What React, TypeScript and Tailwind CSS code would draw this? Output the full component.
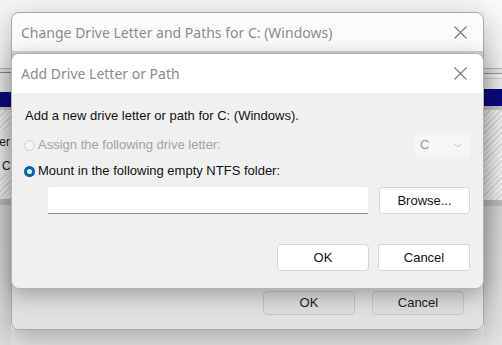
import React from "react";

const titleFont = { fontFamily: '"Noto Sans", "Open Sans", sans-serif' };
const bodyFont = { fontFamily: '"Liberation Sans", Arial, sans-serif' };

function CloseIcon() {
  return (
    <svg width="13" height="13" viewBox="0 0 13 13" fill="none" stroke="#7a7a7a" strokeWidth="1.1">
      <path d="M0.5 0.5L12.5 12.5M12.5 0.5L0.5 12.5" />
    </svg>
  );
}

function Chevron() {
  return (
    <svg width="8" height="5" viewBox="0 0 8 5" fill="none" stroke="#c4c4c4" strokeWidth="1">
      <path d="M0.5 0.5L4 4L7.5 0.5" />
    </svg>
  );
}

function Hatch({ className = "" }: { className?: string }) {
  return (
    <div
      className={`bg-[repeating-linear-gradient(135deg,#d9d9d9_0px,#d9d9d9_1px,#f3f3f3_1px,#f3f3f3_4px)] ${className}`}
    />
  );
}

// window content peeking out behind the dialogs
function LeftStrip() {
  return (
    <div className="w-[11px] flex flex-col overflow-hidden">
      <div className="h-[68px] bg-[#f5f5f5]" />
      <div className="h-px bg-[#b9b9b9]" />
      <div className="h-[3px] bg-[#e6e6e6]" />
      <div className="h-px bg-[#8e8e8e]" />
      <div className="h-[19px] bg-[#ededed]" />
      <div className="h-[15px] bg-[#0a0a80]" />
      <div className="h-[3px] bg-[#cfcfcf]" />
      <Hatch className="h-[20px]" />
      <div className="h-[24px] bg-[#efefef] flex justify-end items-center overflow-hidden">
        <span className="text-[12px] leading-[14px] text-[#222] whitespace-nowrap mr-[1px]" style={bodyFont}>er</span>
      </div>
      <div className="h-[20px] bg-[#efefef] flex items-end pl-[2px] pb-[1px]">
        <span className="text-[12px] leading-[14px] text-[#222]" style={bodyFont}>C</span>
      </div>
      <Hatch className="h-[25px]" />
      <div className="h-[6px] bg-[#bdbdbd]" />
      <div className="flex-1 bg-[linear-gradient(180deg,#d6d6d6,#dedede)]" />
    </div>
  );
}

function RightStrip() {
  return (
    <div className="flex-1 flex flex-col overflow-hidden">
      <div className="h-[68px] bg-[linear-gradient(180deg,#fafafa,#f1f1f1)]" />
      <div className="h-px bg-[#b9b9b9]" />
      <div className="h-[4px] bg-[#e6e6e6]" />
      <div className="h-px bg-[#9a9a9a]" />
      <div className="h-[4px] bg-[#efefef]" />
      <div className="h-px bg-[#cdcdcd]" />
      <div className="h-[10px] bg-[#eeeeee]" />
      <div className="h-[17px] bg-[#0a0a80]" />
      <div className="h-[4px] bg-[#c6c6c6]" />
      <Hatch className="h-[90px]" />
      <div className="h-[6px] bg-[#bdbdbd]" />
      <div className="flex-1 bg-[linear-gradient(180deg,#d4d4d4,#e4e4e4)]" />
    </div>
  );
}

function Button({ label, className = "" }: { label: string; className?: string }) {
  return (
    <div
      className={`flex items-center justify-center rounded-[4px] border text-[13px] ${className}`}
      style={bodyFont}
    >
      {label}
    </div>
  );
}

function BackDialog() {
  return (
    <div className="absolute left-[11px] top-[12px] w-[473px] h-[318px] rounded-[8px] border border-[#a9a9a9] overflow-hidden flex flex-col shadow-[0_8px_28px_rgba(0,0,0,0.28)] bg-[#e1e1e1]">
      <div className="h-[38px] bg-[#fbfbfb] flex items-center justify-between pl-[9px] pr-[16px]">
        <span className="text-[14px] text-[#8c8c8c]" style={titleFont}>
          Change Drive Letter and Paths for C: (Windows)
        </span>
        <CloseIcon />
      </div>
      <div className="flex-1 bg-[linear-gradient(180deg,#d0d0d0,#e3e3e3_40%,#e1e1e1)] flex items-end justify-end gap-[17px] pr-[19px] pb-[14px]">
        <Button label="OK" className="w-[92px] h-[24px] bg-[#dedede] border-[#c6c6c6] text-[#222]" />
        <Button label="Cancel" className="w-[92px] h-[24px] bg-[#dedede] border-[#c6c6c6] text-[#222]" />
      </div>
    </div>
  );
}

function FrontDialog() {
  return (
    <div className="absolute left-[11px] top-[53px] w-[473px] h-[236px] rounded-[8px] border border-[#b4b4b4] overflow-hidden flex flex-col bg-[#f0f0f0] shadow-[0_6px_22px_rgba(0,0,0,0.3)]">
      <div className="h-[39px] shrink-0 bg-white flex items-center justify-between pl-[9px] pr-[16px]">
        <span className="text-[14px] text-[#8c8c8c]" style={titleFont}>
          Add Drive Letter or Path
        </span>
        <CloseIcon />
      </div>
      <div className="flex flex-col pl-[13px] pr-[13px] pt-[15px] text-[13px] text-[#111]" style={bodyFont}>
        <div className="leading-[16px]">Add a new drive letter or path for C: (Windows).</div>

        <div className="mt-[9px] h-[24px] flex items-center justify-between">
          <div className="flex items-center gap-[3px] text-[#a2a2a2]">
            <span className="w-[11px] h-[11px] rounded-full border border-[#cfcfcf] bg-[#f4f4f4] ml-[-1px]" />
            <span>Assign the following drive letter:</span>
          </div>
          <div className="w-[55px] h-[24px] bg-[#f6f6f6] flex items-center justify-between pl-[5px] pr-[8px] text-[13px] text-[#9a9a9a]">
            <span>C</span>
            <Chevron />
          </div>
        </div>

        <div className="mt-[6px] h-[16px] flex items-center gap-[3px]">
          <span className="w-[11px] h-[11px] rounded-full bg-[#005fb8] flex items-center justify-center ml-[-1px]">
            <span className="w-[5px] h-[5px] rounded-full bg-white" />
          </span>
          <span className="leading-[16px]">Mount in the following empty NTFS folder:</span>
        </div>

        <div className="mt-[8px] ml-[23px] flex gap-[11px]">
          <div className="w-[320px] h-[27px] bg-white border-b border-[#8a8a8a] rounded-t-[3px]" />
          <Button label="Browse..." className="w-[91px] h-[27px] bg-white border-[#d6d6d6] text-[#111]" />
        </div>

        <div className="mt-[30px] flex justify-end gap-[9px]">
          <Button label="OK" className="w-[92px] h-[27px] bg-white border-[#d6d6d6] text-[#111]" />
          <Button label="Cancel" className="w-[92px] h-[27px] bg-white border-[#d6d6d6] text-[#111]" />
        </div>
      </div>
    </div>
  );
}

export default function App() {
  return (
    <div className="relative w-[502px] h-[345px] overflow-hidden bg-[#f2f2f2]">
      <div className="flex h-full">
        <LeftStrip />
        <div className="w-[473px] flex flex-col">
          <div className="h-[12px] bg-[#f6f6f6]" />
          <div className="flex-1" />
          <div className="h-[15px] bg-[#e6e6e6]" />
        </div>
        <RightStrip />
      </div>
      <BackDialog />
      <FrontDialog />
    </div>
  );
}
